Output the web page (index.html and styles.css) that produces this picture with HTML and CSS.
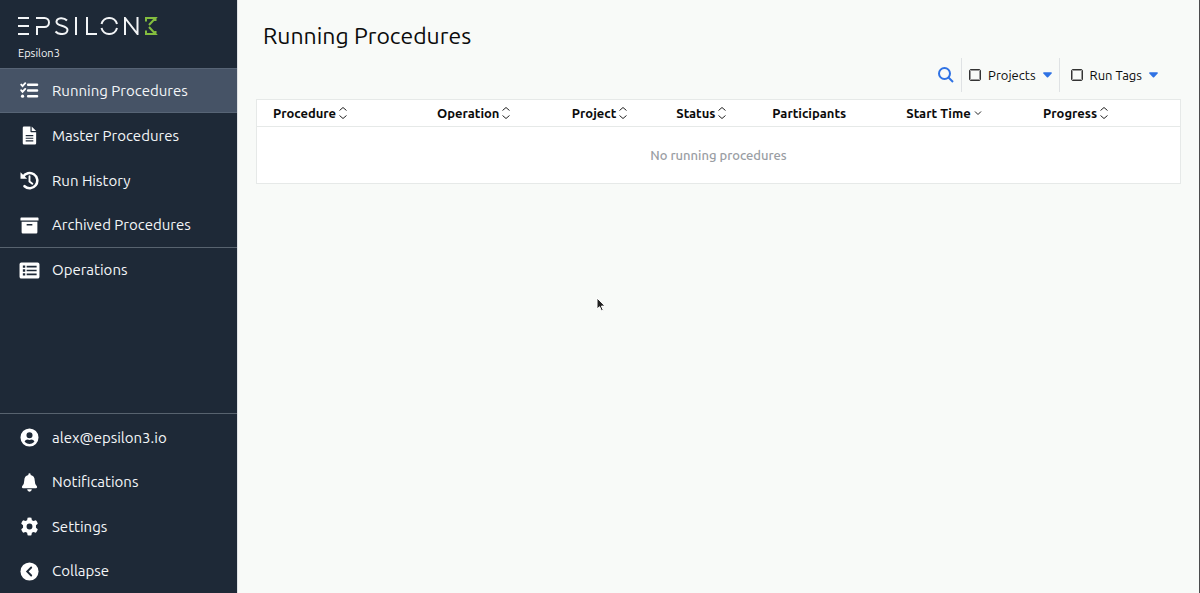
FILE: index.html
```html
<!DOCTYPE html>
<html lang="en">
<head>
<meta charset="utf-8">
<meta name="viewport" content="width=device-width, initial-scale=1">
<title>Running Procedures - Epsilon3</title>
<link rel="stylesheet" href="styles.css">
</head>
<body>
<svg class="defs" aria-hidden="true">
  <symbol id="sort" viewBox="0 0 10 14"><path d="M1.500 4.500 5 1.500 8.500 4.500M1.500 9.500 5 12.500 8.500 9.500"/></symbol>
  <symbol id="caret" viewBox="0 0 10 6"><path d="M.8 0h8.400q1 .4.400 1.200L5.700 5.500q-.7.600-1.400 0L.4 1.200Q-.2.400.8 0z"/></symbol>
</svg>
<div class="app">
  <aside class="sidebar">
    <header class="brand">
      <svg class="logo" viewBox="0 0 140 18" role="img" aria-label="Epsilon3 logo">
        <g class="logo-main">
          <path d="M0 1h11M0 9h11M0 17h11"/>
          <path d="M18 1h8.500a4.500 4.500 0 0 1 0 9H19v8"/>
          <path d="M49 3.500C46 .2 39 .4 38.500 4.500 38 10 49.500 7.500 49.500 13 49 18 41 18.200 37.500 14.500"/>
          <path d="M58 0v18M69 0v17h10"/>
          <path d="M83.500 7a8 8 0 0 1 15.500 0M83.500 11a8 8 0 0 0 15.500 0"/>
          <path d="M107 18V1l12.500 16V0"/>
        </g>
        <path class="logo-three" d="M127 1h10.500l-6.500 7M131 10l6.500 7H127M128 1v3.500M128 17v-3.500M137.500 1v3M137.500 17v-3"/>
      </svg>
      <span class="org">Epsilon3</span>
    </header>
    <nav class="nav" aria-label="Main">
      <a class="nav-item active" href="#running" aria-current="page">
        <svg class="icon" viewBox="0 0 20 20"><g class="bars"><path d="M8.500 4h9.500M8.500 10h9.500M8.500 16h9.500"/></g><path class="ticks" d="m1.300 3.800 1.400 1.500 2.800-3M1.300 9.800l1.400 1.500 2.800-3"/><circle cx="2.700" cy="16" r="1.700"/></svg>
        Running Procedures</a>
      <a class="nav-item" href="#master">
        <svg class="icon" viewBox="0 0 20 20"><path fill-rule="evenodd" d="M4.200.5H11v5.200q0 .8.800.8H17v11.700q0 1.300-1.300 1.300H4.200q-1.300 0-1.300-1.300V1.800Q2.900.5 4.200.5zM6 9.500v1.200h8V9.500zM6 12.300v1.200h8v-1.200zM6 15.100v1.200h8v-1.200zM12.300.5l4.700 4.800h-4.700z"/></svg>
        Master Procedures</a>
      <a class="nav-item" href="#history">
        <svg class="icon" viewBox="0 0 20 20"><path class="line" d="M3.200 6.200a8 8 0 1 1 1.600 9.800"/><path d="M.5 1.200v7h7z"/><path class="hands" d="M10 5.500V11l3 2.300"/></svg>
        Run History</a>
      <a class="nav-item" href="#archived">
        <svg class="icon" viewBox="0 0 20 20"><path fill-rule="evenodd" d="M1.300 1.500h17.400q.8 0 .8.800v2.400H.5V2.300q0-.8.800-.8zM1.700 6h16.600v11.200q0 1.300-1.300 1.300H3q-1.300 0-1.300-1.300zM7 8.300v1.600h6V8.300z"/></svg>
        Archived Procedures</a>
    </nav>
    <nav class="nav ruled" aria-label="Operations">
      <a class="nav-item" href="#operations">
        <svg class="icon wide" viewBox="0 0 22 20"><path fill-rule="evenodd" d="M2.500 1.500h17q2 0 2 2v13q0 2-2 2h-17q-2 0-2-2v-13q0-2 2-2zM4 4.700v2.400h2.500V4.700zM8 5v1.800h10.500V5zM4 8.800v2.400h2.500V8.800zM8 9.100v1.800h10.500V9.100zM4 12.900v2.400h2.500v-2.400zM8 13.200V15h10.500v-1.800z"/></svg>
        Operations</a>
    </nav>
    <nav class="nav ruled account" aria-label="Account">
      <a class="nav-item" href="#profile">
        <svg class="icon" viewBox="0 0 20 20"><path fill-rule="evenodd" d="M10 .5a9.500 9.500 0 1 1 0 19 9.500 9.500 0 0 1 0-19zM10 4.500a3.200 3.200 0 1 0 0 6.400 3.200 3.200 0 0 0 0-6.400zM4.800 14.400q5.200 4.800 10.400 0-.8-2.200-3.200-2.200-2 .7-4 0-2.400 0-3.200 2.200z"/></svg>
        alex@epsilon3.io</a>
      <a class="nav-item" href="#notifications">
        <svg class="icon" viewBox="0 0 20 20"><path d="M10 .3q1.200 0 1.200 1.200v.7q4.300 1 4.300 5.800 0 4 2.300 6 .8 1.800-.8 2H3q-1.600-.2-.8-2 2.300-2 2.300-6 0-4.800 4.300-5.800v-.7Q8.800.3 10 .3zM7.500 17.200h5q-.3 2.500-2.500 2.500t-2.500-2.500z"/></svg>
        Notifications</a>
      <a class="nav-item" href="#settings">
        <svg class="icon" viewBox="0 0 20 20"><path fill-rule="evenodd" d="M8 .8q2-.6 4 0l.5 2.500 1.700 1 2.500-.8q1.500 1.500 2 3.500L16.800 8.800v2.400l1.900 1.800q-.5 2-2 3.500l-2.500-.8-1.700 1-.5 2.500q-2 .6-4 0l-.5-2.500-1.700-1-2.500.8q-1.500-1.500-2-3.500l1.900-1.800V8.800L1.300 7q.5-2 2-3.500l2.500.8 1.700-1zM10 6.900a3.100 3.100 0 1 0 0 6.200 3.100 3.100 0 0 0 0-6.200z"/></svg>
        Settings</a>
      <button class="nav-item" type="button">
        <svg class="icon" viewBox="0 0 20 20"><circle cx="10" cy="10" r="9.500"/><path class="back" d="M11.800 5.800 7.600 10l4.200 4.200"/></svg>
        Collapse</button>
    </nav>
  </aside>
  <main class="content">
    <h1 class="title">Running Procedures</h1>
    <div class="toolbar">
      <button class="search" type="button" aria-label="Search"><svg viewBox="0 0 16 16"><circle cx="6.500" cy="6.500" r="5.500"/><path d="m10.500 10.500 4.500 4.500"/></svg></button>
      <div class="filter">
        <input class="box" type="checkbox" id="projects"><label for="projects">Projects</label>
        <button class="caret" type="button" aria-label="Choose projects"><svg><use href="#caret"/></svg></button>
      </div>
      <div class="filter">
        <input class="box" type="checkbox" id="tags"><label for="tags">Run Tags</label>
        <button class="caret" type="button" aria-label="Choose run tags"><svg><use href="#caret"/></svg></button>
      </div>
    </div>
    <table class="procedures">
      <colgroup><col class="c-procedure"><col class="c-operation"><col class="c-project"><col class="c-status"><col class="c-participants"><col class="c-start"><col></colgroup>
      <thead>
        <tr>
          <th><button class="sort" type="button">Procedure<svg><use href="#sort"/></svg></button></th>
          <th><button class="sort" type="button">Operation<svg><use href="#sort"/></svg></button></th>
          <th><button class="sort" type="button">Project<svg><use href="#sort"/></svg></button></th>
          <th><button class="sort" type="button">Status<svg><use href="#sort"/></svg></button></th>
          <th>Participants</th>
          <th><button class="sort" type="button">Start Time<svg viewBox="0 0 10 14"><path d="M2 5.500 5 8.500 8 5.500"/></svg></button></th>
          <th><button class="sort" type="button">Progress<svg><use href="#sort"/></svg></button></th>
        </tr>
      </thead>
      <tbody><tr><td class="empty" colspan="7">No running procedures</td></tr></tbody>
    </table>
  </main>
</div>
<svg class="pointer" viewBox="0 0 10 16" aria-hidden="true"><path d="M1 1v11l2.600-2.300L5.500 14l1.800-.8-1.900-4.100H9z"/></svg>
</body>
</html>
```
FILE: styles.css
```css
* { box-sizing: border-box; }

body {
  margin: 0;
  font-family: Ubuntu, "Noto Sans", "Open Sans", sans-serif;
  font-size: 13px;
  color: #0b0b0b;
  background: #f8faf8;
}

button {
  margin: 0;
  padding: 0;
  border: 0;
  background: none;
  color: inherit;
  font: inherit;
  cursor: pointer;
}

.defs { position: absolute; width: 0; height: 0; }

.app {
  display: flex;
  min-height: 100vh;
  border-right: 1px solid #4b4b4d;
}

.sidebar {
  display: flex;
  flex-direction: column;
  flex: none;
  width: 238px;
  background: #1e2937;
  border-right: 1px solid #dfe2e5;
  color: #f4f6f8;
}

.brand {
  display: flex;
  flex-direction: column;
  gap: 11px;
  height: 68px;
  padding: 17px 18px 0;
}

.logo { width: 140px; height: 18px; fill: none; stroke-width: 2; }
.logo-main { stroke: #f2f4f6; }
.logo-three { stroke: #83bd3f; }
.org { font-size: 11px; line-height: 14px; }

.nav { display: flex; flex-direction: column; }
.ruled { border-top: 1px solid #58636f; }
.account { margin-top: auto; padding: 1px 0 0; }

.nav-item {
  display: flex;
  align-items: center;
  gap: 13px;
  height: 45px;
  padding-left: 20px;
  font-size: 15px;
  line-height: 20px;
  color: inherit;
  text-decoration: none;
}

.nav .nav-item:last-child { height: 44px; }
.account .nav-item:nth-child(even) { height: 44px; }

.active {
  background: #465366;
  border-top: 1px solid #576475;
  border-bottom: 1px solid #576475;
}

.icon { flex: none; width: 19px; height: 19px; fill: #fff; }
.wide { width: 21px; margin: 0 -1px; }
.bars, .ticks, .line, .hands, .back { fill: none; stroke: #fff; stroke-linecap: round; }
.bars { stroke-width: 2.500; }
.ticks { stroke-width: 2; }
.line { stroke-width: 2.700; }
.hands { stroke-width: 2; }
.back { stroke: #1e2937; stroke-width: 2; }

.content { flex: 1; min-width: 0; padding: 20px 18px; }

.title {
  margin: 0;
  padding-left: 7px;
  font-size: 23px;
  font-weight: 400;
  line-height: 32px;
}

.toolbar {
  display: flex;
  justify-content: flex-end;
  align-items: center;
  height: 34px;
  margin: 6px 0 7px;
}

.search { display: flex; padding: 0 7px; }
.search svg { width: 16px; height: 16px; fill: none; stroke: #2f72e4; stroke-width: 2; }

.filter {
  display: flex;
  align-items: center;
  height: 34px;
  padding: 0 7px;
  border-left: 1px solid #dfe2e4;
}

.filter + .filter { padding: 0 23px 0 11px; }

.box {
  appearance: none;
  width: 12px;
  height: 12px;
  margin: 0 7px 0 0;
  border: 1px solid #333;
  outline: 1px solid #999;
  outline-offset: -2px;
  border-radius: 2px;
}

.caret { display: flex; margin-left: 7px; }
.caret svg { width: 9px; height: 6px; fill: #2f72e4; }

.procedures {
  width: 100%;
  table-layout: fixed;
  border-collapse: collapse;
  background: #fff;
  border: 1px solid #e6e9e8;
}

.c-procedure { width: 17.800%; }
.c-operation { width: 14.600%; }
.c-project { width: 11.300%; }
.c-status { width: 10.400%; }
.c-participants { width: 14.500%; }
.c-start { width: 14.800%; }

.procedures th {
  height: 27px;
  padding: 0 0 0 16px;
  border-bottom: 1px solid #e6e9e8;
  text-align: left;
  font-weight: 600;
  white-space: nowrap;
}

.sort { display: inline-flex; align-items: center; gap: 2px; }
.sort svg { width: 10px; height: 14px; fill: none; stroke: #222; stroke-width: 1; }

.empty {
  height: 57px;
  padding: 0;
  text-align: center;
  font-weight: 500;
  color: #999da3;
}

.pointer {
  position: absolute;
  left: 596px;
  top: 297px;
  width: 10px;
  height: 16px;
  fill: #202020;
  stroke: #fff;
  stroke-width: 1;
  pointer-events: none;
}
```
